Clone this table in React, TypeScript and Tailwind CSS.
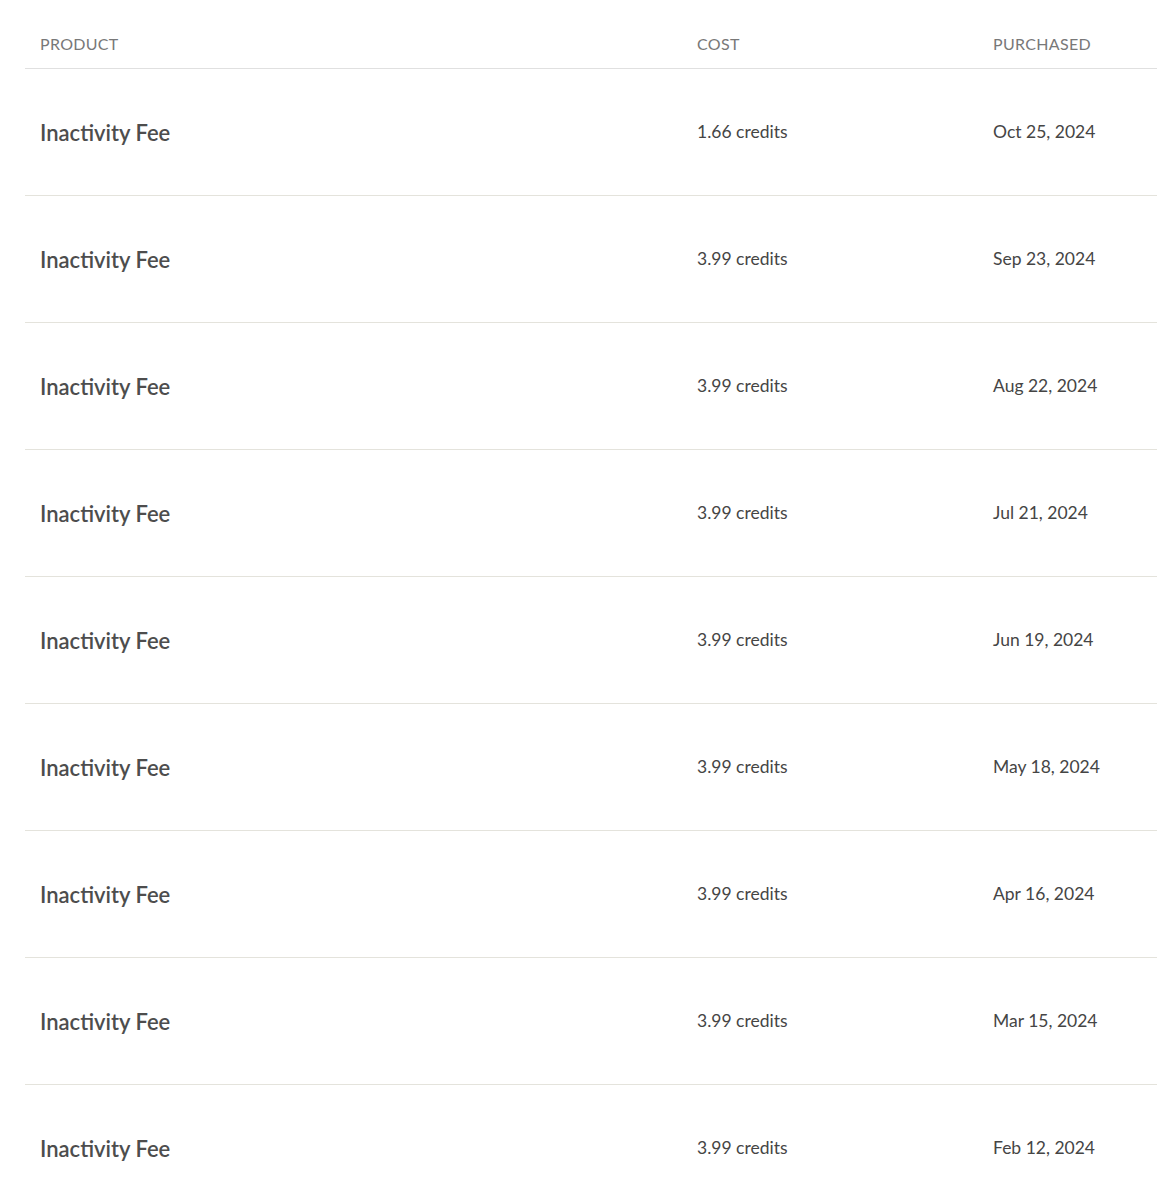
const rows = [
  { product: 'Inactivity Fee', cost: '1.66 credits', date: 'Oct 25, 2024' },
  { product: 'Inactivity Fee', cost: '3.99 credits', date: 'Sep 23, 2024' },
  { product: 'Inactivity Fee', cost: '3.99 credits', date: 'Aug 22, 2024' },
  { product: 'Inactivity Fee', cost: '3.99 credits', date: 'Jul 21, 2024' },
  { product: 'Inactivity Fee', cost: '3.99 credits', date: 'Jun 19, 2024' },
  { product: 'Inactivity Fee', cost: '3.99 credits', date: 'May 18, 2024' },
  { product: 'Inactivity Fee', cost: '3.99 credits', date: 'Apr 16, 2024' },
  { product: 'Inactivity Fee', cost: '3.99 credits', date: 'Mar 15, 2024' },
  { product: 'Inactivity Fee', cost: '3.99 credits', date: 'Feb 12, 2024' },
];

export default function App() {
  return (
    <div className="min-h-screen bg-white pt-5 pl-[25px] font-['Lato',sans-serif]">
      {/* Header */}
      <div className="grid grid-cols-[657px_296px_1fr] h-[49px] items-center pl-[15px] border-b border-[#e0e0e0] text-[16px] tracking-[0.02em] text-[#787878]">
        <span>PRODUCT</span>
        <span>COST</span>
        <span>PURCHASED</span>
      </div>

      {/* Rows */}
      {rows.map((r, i) => (
        <div
          key={i}
          className="grid grid-cols-[657px_296px_1fr] h-[127px] items-center pl-[15px] border-b border-[#e4e3dc]"
        >
          <span className="text-[22px] font-semibold text-[#4d4d4d]">{r.product}</span>
          <span className="text-[17.5px] text-[#454545]">{r.cost}</span>
          <span className="text-[17.5px] text-[#454545]">{r.date}</span>
        </div>
      ))}
    </div>
  );
}
